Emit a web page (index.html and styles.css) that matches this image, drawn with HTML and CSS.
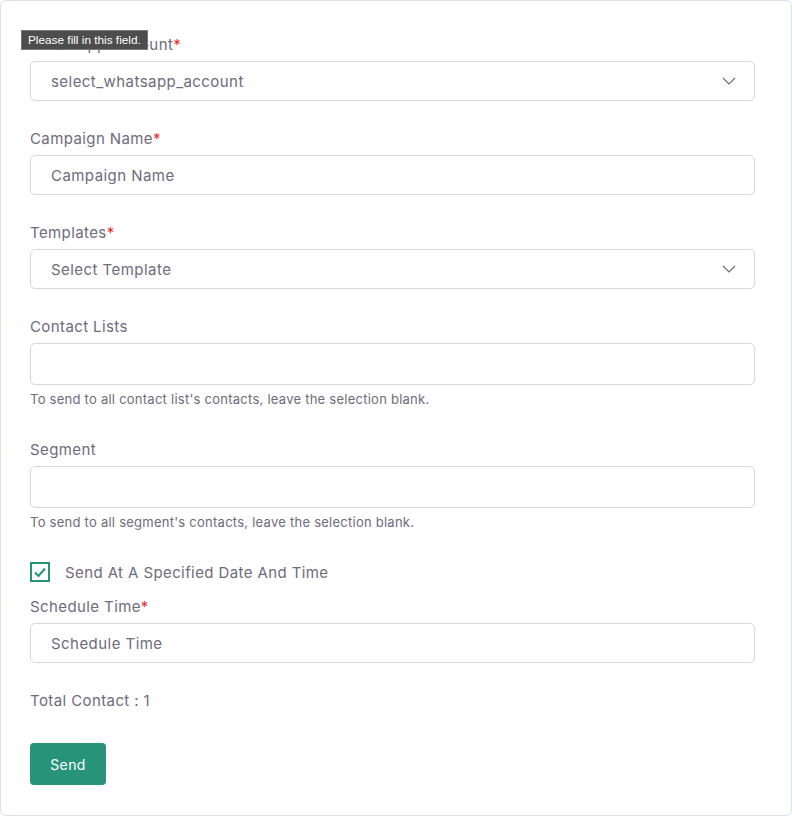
FILE: index.html
```html
<!DOCTYPE html>
<html lang="en">
<head>
  <meta charset="UTF-8" />
  <meta name="viewport" content="width=device-width, initial-scale=1" />
  <title>Send Campaign</title>
  <link rel="stylesheet" href="styles.css">
</head>
<body>

<div class="card">
  <form class="campaign-form">
    <div class="field">
      <label class="field-label">WhatsApp Account<span class="req">*</span></label>
      <div class="select-box">
        <span class="value">select_whatsapp_account</span>
        <svg class="chevron" width="14" height="8" viewBox="0 0 14 8"><path d="M1 1l6 6 6-6" fill="none" stroke="#6e6b7b" stroke-width="1.2"/></svg>
      </div>
      <div class="tooltip">Please fill in this field.</div>
    </div>

    <div class="field">
      <label class="field-label">Campaign Name<span class="req">*</span></label>
      <input class="text-input" type="text" placeholder="Campaign Name" />
    </div>

    <div class="field">
      <label class="field-label">Templates<span class="req">*</span></label>
      <div class="select-box">
        <span class="value">Select Template</span>
        <svg class="chevron" width="14" height="8" viewBox="0 0 14 8"><path d="M1 1l6 6 6-6" fill="none" stroke="#6e6b7b" stroke-width="1.2"/></svg>
      </div>
    </div>

    <div class="field with-help">
      <label class="field-label">Contact Lists</label>
      <div class="multi-box"></div>
      <p class="help">To send to all contact list's contacts, leave the selection blank.</p>
    </div>

    <div class="field with-help">
      <label class="field-label">Segment</label>
      <div class="multi-box"></div>
      <p class="help">To send to all segment's contacts, leave the selection blank.</p>
    </div>

    <div class="check-row">
      <span class="checkbox">
        <svg width="14" height="12" viewBox="0 0 14 12"><path d="M2 6.5l3.5 3.5L12 2.5" fill="none" stroke="#279479" stroke-width="2"/></svg>
      </span>
      <span class="check-label">Send At A Specified Date And Time</span>
    </div>

    <div class="field schedule">
      <label class="field-label">Schedule Time<span class="req">*</span></label>
      <input class="text-input" type="text" placeholder="Schedule Time" />
    </div>

    <p class="total">Total Contact : 1</p>

    <button type="button" class="send-btn">Send</button>
  </form>
</div>

</body>
</html>
```

FILE: styles.css
```css
body { margin: 0; font-family: "Inter", "Lato", sans-serif; background: #fff; color: #6e6b7b; letter-spacing: 0.4px; }
.card {
  border: 1px solid #dde1ee; border-radius: 6px; background: #fff;
  height: 816px; box-sizing: border-box; padding: 34px 36px 0 29px;
}
.field { position: relative; margin-bottom: 28px; }
.field-label { display: block; font-size: 15px; color: #6e6b7b; margin-bottom: 7px; line-height: 19px; }
.req { color: #ea2a2a; }
.select-box, .text-input {
  display: flex; align-items: center; justify-content: space-between;
  width: 100%; height: 40px; box-sizing: border-box;
  border: 1px solid #d8d6de; border-radius: 5px; padding: 0 20px;
  font-family: inherit; font-size: 15px; color: #6e6b7b; background: #fff; letter-spacing: 0.45px;
}
.text-input::placeholder { color: #6e6b7b; }
.chevron { margin-right: -2px; }
.multi-box { height: 42px; border: 1px solid #d8d6de; border-radius: 5px; box-sizing: border-box; }
.help { margin: 5px 0 0; font-size: 13px; color: #6e6b7b; line-height: 18px; letter-spacing: 0.25px; }
.field.with-help { margin-bottom: 32px; }
.tooltip {
  position: absolute; left: -9px; top: -5px; letter-spacing: 0;
  background: #4d4d4d; color: #fff; font-size: 11.8px; padding: 2px 6px; line-height: 14px;
  border: 1px solid #777; font-family: "Liberation Sans", sans-serif;
}
.check-row { display: flex; align-items: center; gap: 15px; margin-top: -1px; }
.checkbox {
  width: 20px; height: 20px; box-sizing: border-box; border: 2px solid #279479;
  display: flex; align-items: center; justify-content: center;
}
.check-label { font-size: 15px; color: #6e6b7b; }
.schedule { margin-top: 15px; }
.total { margin: 0; font-size: 15px; color: #6e6b7b; line-height: 19px; }
.send-btn {
  margin-top: 33px; width: 76px; height: 42px; border: none; border-radius: 4px;
  background: #279479; color: #fff; font-family: inherit; font-size: 14px; letter-spacing: 0.4px;
}
```
